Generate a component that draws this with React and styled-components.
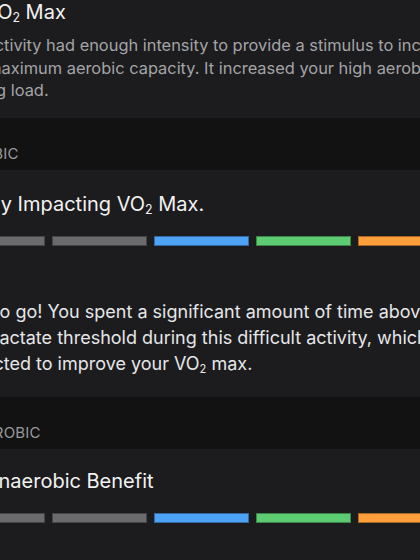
import styled, { createGlobalStyle } from 'styled-components';

const GlobalStyle = createGlobalStyle`
  html, body {
    margin: 0;
    padding: 0;
    background: #1c1c1e;
  }
  body {
    font-family: Inter, "Noto Sans", "Liberation Sans", sans-serif;
    -webkit-font-smoothing: antialiased;
  }
`;

const Viewport = styled.div`
  width: 420px;
  height: 560px;
  overflow: hidden;
  background: #121212;
`;

// the detail screen is wider than the window and scrolled sideways
const Screen = styled.div`
  width: 560px;
  margin-left: -48px;
  margin-top: -12px;
`;

const Card = styled.section`
  background: #1c1c1e;
  padding: ${(p) => p.$pad || '22px 0 20px'};
`;

const SectionHeader = styled.div`
  background: #121212;
  height: 52px;
  box-sizing: border-box;
  padding-top: 27px;
  color: #9a9a9e;
  font-size: 15px;
  line-height: 18px;
  letter-spacing: 0.2px;
`;

const Title = styled.h3`
  margin: 0;
  font-weight: 400;
  font-size: 20px;
  line-height: 24px;
  color: #f2f2f2;
`;

const Sub = styled.span`
  font-size: 0.62em;
  vertical-align: -0.25em;
  line-height: 0;
`;

const Body = styled.p`
  margin: ${(p) => p.$mt || '8px'} 0 0 ${(p) => p.$ml || '0'};
  font-size: ${(p) => (p.$muted ? '16.4px' : '18px')};
  line-height: ${(p) => (p.$muted ? '22.5px' : '26px')};
  color: ${(p) => (p.$muted ? '#a4a4a8' : '#e6e6e8')};
  white-space: nowrap;
`;

const Scale = styled.div`
  display: flex;
  gap: 7.5px;
  margin-top: 20px;
  margin-left: -2px;
`;

const Bar = styled.div`
  width: 94.5px;
  height: 10px;
  flex: none;
  box-sizing: border-box;
  background: ${(p) => p.$color};
  border: 1px solid rgba(0, 0, 0, 0.35);
`;

const Badge = styled.span`
  display: inline-block;
  width: 24px;
  height: 24px;
  margin-right: 8px;
  border-radius: 50%;
  background: #4da3ff;
  vertical-align: -5px;
`;

const SCALE = ['#6b6b6d', '#6b6b6d', '#4fa3f7', '#5ccb72', '#ff9e3b'];

const Bars = () => (
  <Scale>
    {SCALE.map((c, i) => (
      <Bar key={i} $color={c} />
    ))}
  </Scale>
);

const VO2 = () => (
  <>
    VO<Sub>2</Sub>
  </>
);

export default function App() {
  return (
    <>
      <GlobalStyle />
      <Viewport>
        <Screen>
          <Card $pad="12px 0 16px">
            <Title>
              <Badge />
              <VO2 /> Max
            </Title>
            <Body $muted $mt="10px" $ml="-4px">
              This activity had enough intensity to provide a stimulus to increase
              <br />
              your maximum aerobic capacity. It increased your high aerobic
              <br />
              training load.
            </Body>
          </Card>

          <SectionHeader>AEROBIC</SectionHeader>
          <Card>
            <Title>
              Highly Impacting <VO2 /> Max.
            </Title>
            <Bars />
            <Body $mt="53px">
              Way to go! You spent a significant amount of time above
              <br />
              your lactate threshold during this difficult activity, which is
              <br />
              expected to improve your <VO2 /> max.
            </Body>
          </Card>

          <SectionHeader>ANAEROBIC</SectionHeader>
          <Card $pad="20px 0 40px">
            <Title>No Anaerobic Benefit</Title>
            <Bars />
          </Card>
        </Screen>
      </Viewport>
    </>
  );
}
